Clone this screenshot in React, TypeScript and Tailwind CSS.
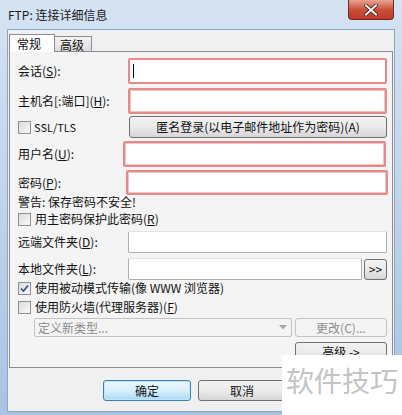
import React from "react";

const font = { fontFamily: '"Noto Sans CJK SC", "Noto Sans", sans-serif' };

const Checkbox = ({ checked = false }: { checked?: boolean }) => (
  <span className="w-[13px] h-[13px] border border-[#8e8f8f] bg-gradient-to-br from-[#dcdcdc] to-[#f8f8f8] flex items-center justify-center shrink-0">
    {checked && (
      <svg width="9" height="9" viewBox="0 0 9 9">
        <path d="M1 4.5 L3.5 7 L8 1.5" stroke="#2a4d8f" strokeWidth="1.6" fill="none" />
      </svg>
    )}
  </span>
);

const RedInput = ({ cls }: { cls: string }) => (
  <div className={`border-2 border-[#e58a8a] bg-white rounded-[2px] ${cls}`}>
    <div className="w-full h-full border border-[#f3c2c2]"></div>
  </div>
);

const Button = ({ children, cls }: { children: React.ReactNode; cls: string }) => (
  <div
    className={`border border-[#707070] rounded-[3px] bg-gradient-to-b from-[#f2f2f2] via-[#ebebeb] to-[#d6d6d6] flex items-center justify-center text-[12px] text-[#111] ${cls}`}
  >
    {children}
  </div>
);

const Row = ({ label, children, cls }: { label: React.ReactNode; children: React.ReactNode; cls: string }) => (
  <div className={`flex items-center ${cls}`}>
    <div className="w-[110px] shrink-0 text-[12px] text-[#111]">{label}</div>
    {children}
  </div>
);

export default function App() {
  return (
    <div
      className="relative w-[402px] h-[415px] overflow-hidden bg-gradient-to-b from-[#d5e3f3] via-[#bfd3ea] to-[#a9c3e2]"
      style={font}
    >
      {/* title bar */}
      <div className="h-[29px] flex justify-between pl-[8px] pr-[8px]">
        <span className="text-[12px] text-[#1a1a1a] mt-[6px]">FTP: 连接详细信息</span>
        <div className="w-[46px] h-[20px] rounded-b-[4px] border border-t-0 border-[#6b2b22] bg-gradient-to-b from-[#e8a393] via-[#c9503a] to-[#c03a24] flex items-center justify-center">
          <svg width="14" height="12" viewBox="0 0 14 12">
            <path d="M2 1.5 L12 10.5 M12 1.5 L2 10.5" stroke="#3a1410" strokeWidth="3.6" strokeLinecap="square" />
            <path d="M2 1.5 L12 10.5 M12 1.5 L2 10.5" stroke="#ffffff" strokeWidth="2" strokeLinecap="square" />
          </svg>
        </div>
      </div>

      {/* client area */}
      <div className="mx-[7px] h-[383px] bg-[#f0f0f0] border border-[#8fa6c2] flex flex-col">
        {/* tabs */}
        <div className="flex items-end pl-[1px] pt-[3px] h-[21px]">
          <div className="w-[46px] h-[18px] border border-b-0 border-[#898c95] bg-white text-[12px] text-[#111] pl-[7px] leading-[17px] relative z-10 -mb-px">
            常规
          </div>
          <div className="w-[37px] h-[15px] border border-b-0 border-l-0 border-[#898c95] bg-gradient-to-b from-[#f4f4f4] to-[#dcdcdc] text-[12px] text-[#111] pl-[5px] leading-[15px]">
            高级
          </div>
        </div>

        {/* panel */}
        <div className="mx-[1px] h-[317px] border border-[#898c95] bg-[#f4f4f4] pl-[8px] pr-[5px] flex flex-col">
          <Row label={<>会话(<u>S</u>):</>} cls="mt-[6px]">
            <div className="flex-1 h-[26px] border-2 border-[#e58a8a] bg-white rounded-[2px] flex items-center pl-[3px]">
              <span className="w-px h-[14px] bg-black"></span>
            </div>
          </Row>
          <Row label={<>主机名[:端口](<u>H</u>):</>} cls="mt-[4px]">
            <RedInput cls="flex-1 h-[26px]" />
          </Row>
          <div className="flex items-center mt-[2px] h-[22px]">
            <div className="w-[111px] flex items-center gap-[3px] text-[11px] text-[#111]">
              <Checkbox />
              <span>SSL/TLS</span>
            </div>
            <Button cls="flex-1 h-[22px]">匿名登录(以电子邮件地址作为密码)(A)</Button>
          </div>
          <div className="flex items-center mt-[3px]">
            <div className="w-[105px] shrink-0 text-[12px] text-[#111]">用户名(<u>U</u>):</div>
            <RedInput cls="flex-1 h-[26px] mr-[1px]" />
          </div>
          <div className="flex items-center mt-[3px]">
            <div className="w-[108px] shrink-0 text-[12px] text-[#111]">密码(<u>P</u>):</div>
            <RedInput cls="flex-1 h-[25px] -mr-[1px]" />
          </div>
          <div className="text-[12px] text-[#111] h-[16px] leading-[16px] mt-[-1px]">警告: 保存密码不安全!</div>
          <div className="flex items-center gap-[4px] text-[12px] text-[#111] h-[18px] mt-[0px]">
            <Checkbox />
            <span>用主密码保护此密码(<u>R</u>)</span>
          </div>
          <Row label={<>远端文件夹(<u>D</u>):</>} cls="mt-[3px]">
            <div className="flex-1 h-[22px] border border-[#abadb3] border-t-[#e3e3e3] bg-white rounded-[2px]"></div>
          </Row>
          <Row label={<>本地文件夹(<u>L</u>):</>} cls="mt-[5px]">
            <div className="flex-1 h-[22px] border border-[#abadb3] border-t-[#e3e3e3] bg-white rounded-[2px]"></div>
            <Button cls="w-[23px] h-[21px] ml-[2px] text-[11px]">&gt;&gt;</Button>
          </Row>
          <div className="flex items-center gap-[4px] text-[12px] text-[#111] h-[18px] mt-[-1px]">
            <Checkbox checked />
            <span>使用被动模式传输(像 WWW 浏览器)</span>
          </div>
          <div className="flex items-center gap-[4px] text-[12px] text-[#111] h-[18px] mt-[1px]">
            <Checkbox />
            <span>使用防火墙(代理服务器)(<u>F</u>)</span>
          </div>
          <div className="flex items-center mt-[2px] pl-[16px]">
            <div className="w-[258px] h-[19px] border border-[#c2c2c2] rounded-[2px] bg-[#f4f4f4] flex items-center justify-between pl-[3px] pr-[4px] text-[12px] text-[#8d8d8d]">
              <span>定义新类型...</span>
              <svg width="8" height="5" viewBox="0 0 8 5">
                <path d="M0 0 L8 0 L4 4.5 Z" fill="#a8a8a8" />
              </svg>
            </div>
            <div className="flex-1 ml-[3px] h-[19px] border border-[#c2c2c2] rounded-[3px] bg-[#f4f4f4] flex items-center justify-center text-[12px] text-[#8d8d8d]">
              更改(C)...
            </div>
          </div>
          <div className="flex justify-end mt-[5px]">
            <Button cls="w-[92px] h-[19px]">高级 -&gt;</Button>
          </div>
        </div>

        {/* bottom buttons */}
        <div className="flex pl-[95px] gap-[7px] mt-[12px]">
          <div className="w-[88px] h-[21px] border border-[#3c7fb1] rounded-[3px] bg-gradient-to-b from-[#eaf6fd] via-[#d9f0fc] to-[#a7d9f5] shadow-[inset_0_0_0_1px_#bfe5f8] flex items-center justify-center text-[12px] text-[#111]">
            确定
          </div>
          <Button cls="w-[88px] h-[21px]">取消</Button>
        </div>
      </div>

      {/* watermark overlay */}
      <div className="absolute left-[282px] top-[355px] w-[120px] h-[60px] bg-white flex items-start pl-[4px] pt-[8px]">
        <span className="text-[28px] leading-[34px] text-[#c4c4c4] tracking-[0px]">软件技巧</span>
      </div>
    </div>
  );
}
